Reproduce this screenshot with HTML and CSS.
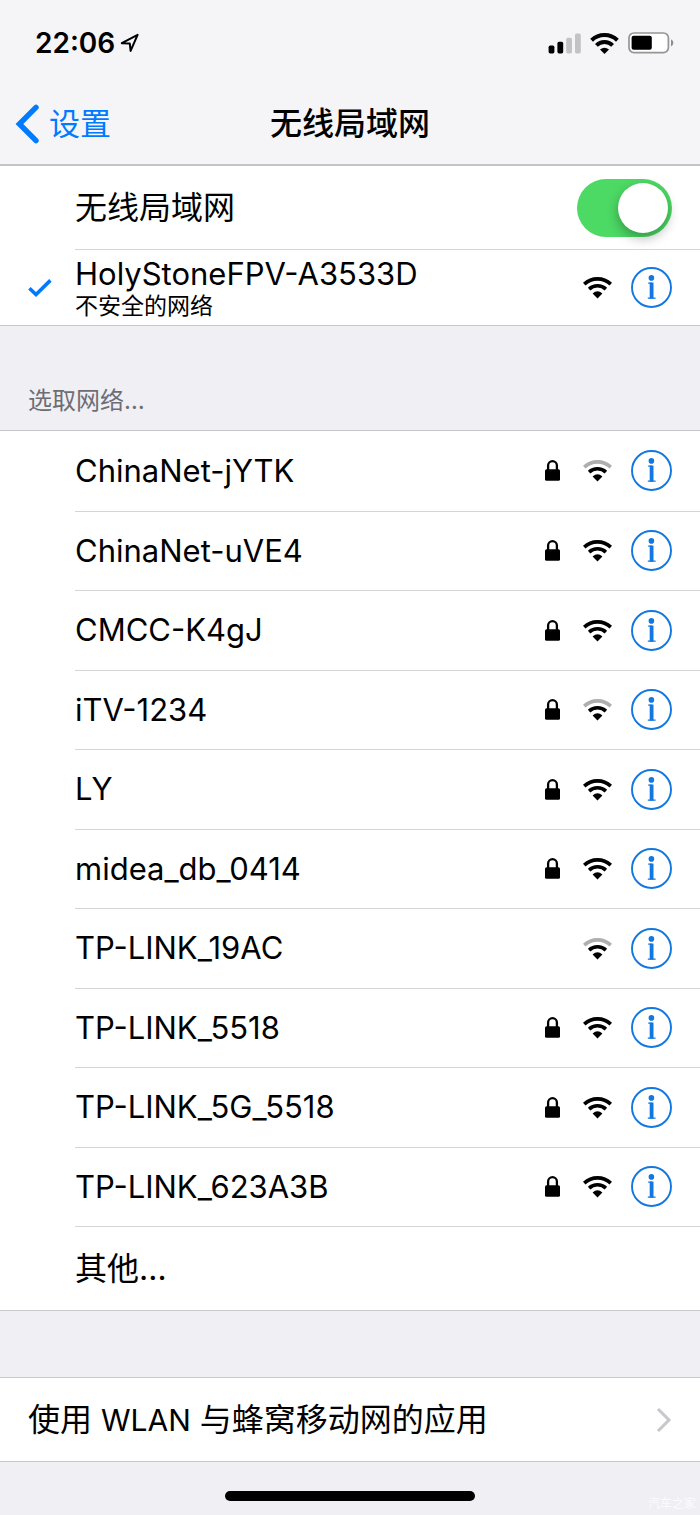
FILE: index.html
```html
<!DOCTYPE html>
<html lang="zh-CN">
<head>
    <meta charset="UTF-8">
    <meta name="viewport" content="width=device-width, initial-scale=1.0">
    <title>无线局域网</title>
    <link rel="stylesheet" href="styles.css">
</head>
<body>
    <!-- shared icons -->
    <svg class="sprite" aria-hidden="true">
        <symbol id="wifi" viewBox="0 0 29 23">
            <path class="arc" d="M1.2 8.1A19.5 19.5 0 0 1 27.8 8.1" fill="none" stroke-width="3.7"/>
            <path d="M6.1 13.1A12.4 12.4 0 0 1 22.9 13.1" fill="none" stroke="currentColor" stroke-width="3.6"/>
            <path d="M9.6 17.4Q14.5 13.2 19.4 17.4L14.5 22.6Z" fill="currentColor"/>
        </symbol>
        <symbol id="lock" viewBox="0 0 15 21">
            <rect x="0" y="9.2" width="15" height="11.6" rx="1.5" fill="currentColor"/>
            <path d="M3.1 10V5.6A4.4 4.4 0 0 1 11.9 5.6V10" fill="none" stroke="currentColor" stroke-width="2.3"/>
        </symbol>
        <symbol id="info" viewBox="0 0 41 41">
            <circle cx="20.5" cy="20.5" r="19.5" fill="none" stroke="currentColor" stroke-width="1.9"/>
            <circle cx="20.4" cy="10.9" r="2.8" fill="currentColor"/>
            <path d="M17.2 16.2H20.6V31M16.8 31.2H24.6" fill="none" stroke="currentColor" stroke-width="1.3"/>
            <rect x="18.7" y="15.6" width="3.8" height="16" fill="currentColor"/>
        </symbol>
    </svg>

    <header class="top">
        <div class="status-bar">
            <span class="time">22:06</span>
            <svg class="location" width="20" height="20" viewBox="0 0 20 20"><path d="M1.8 10.2L17.6 1.8L10.6 17.9L9.8 10.6Z" fill="none" stroke="currentColor" stroke-width="2" stroke-linejoin="round"/></svg>
            <div class="status-icons">
                <svg width="33" height="21" viewBox="0 0 33 21">
                    <rect x="0.6" y="12.6" width="5.8" height="7.8" rx="1.6"/>
                    <rect x="9.4" y="8.8" width="5.8" height="11.6" rx="1.6"/>
                    <rect x="18.2" y="4.8" width="5.8" height="15.6" rx="1.6" fill="#c3c3c5"/>
                    <rect x="27" y="0.4" width="5.8" height="20" rx="1.6" fill="#c3c3c5"/>
                </svg>
                <svg width="29" height="21" viewBox="0 0 29 21">
                    <path d="M1.6 7.3A18.6 18.6 0 0 1 27.4 7.3M6.4 12.4A11.6 11.6 0 0 1 22.6 12.4" fill="none" stroke="currentColor" stroke-width="4"/>
                    <path d="M10 16.6Q14.5 13 19 16.6L14.5 21Z"/>
                </svg>
                <svg width="46" height="22" viewBox="0 0 46 22">
                    <rect x="1" y="1" width="39.4" height="19.6" rx="5" fill="#fff" stroke="#959597" stroke-width="1.7"/>
                    <rect x="3.6" y="3.8" width="20.2" height="14" rx="2"/>
                    <path d="M43 7.2Q45.4 8.2 45.4 10.8Q45.4 13.4 43 14.4Z" fill="#8e8e90"/>
                </svg>
            </div>
        </div>
        <nav class="nav-bar">
            <a class="back" href="#">
                <svg width="24" height="40" viewBox="0 0 24 40"><path d="M21 3.4L4.4 20L21 36.6" fill="none" stroke="currentColor" stroke-width="5.4" stroke-linecap="round"/></svg>
                设置
            </a>
            <h1>无线局域网</h1>
        </nav>
    </header>

    <main>
        <section class="group">
            <div class="row tall">
                <label class="name" for="wlan">无线局域网</label>
                <input class="switch" type="checkbox" role="switch" id="wlan" checked>
            </div>
            <div class="row current">
                <svg class="check" width="24" height="20" viewBox="0 0 24 20"><path d="M1.4 10.2L8 16.6L22.4 2.4" fill="none" stroke="currentColor" stroke-width="3.6"/></svg>
                <div class="name">
                    <div>HolyStoneFPV-A3533D</div>
                    <div class="note">不安全的网络</div>
                </div>
                <svg class="wifi"><use href="#wifi"/></svg>
                <button class="info" aria-label="HolyStoneFPV-A3533D"><svg><use href="#info"/></svg></button>
            </div>
        </section>

        <h2>选取网络…</h2>
        <ul class="group networks">
            <li class="row">
                <span class="name">ChinaNet-jYTK</span>
                <svg class="lock"><use href="#lock"/></svg>
                <svg class="wifi weak"><use href="#wifi"/></svg>
                <button class="info" aria-label="ChinaNet-jYTK"><svg><use href="#info"/></svg></button>
            </li>
            <li class="row">
                <span class="name">ChinaNet-uVE4</span>
                <svg class="lock"><use href="#lock"/></svg>
                <svg class="wifi"><use href="#wifi"/></svg>
                <button class="info" aria-label="ChinaNet-uVE4"><svg><use href="#info"/></svg></button>
            </li>
            <li class="row">
                <span class="name">CMCC-K4gJ</span>
                <svg class="lock"><use href="#lock"/></svg>
                <svg class="wifi"><use href="#wifi"/></svg>
                <button class="info" aria-label="CMCC-K4gJ"><svg><use href="#info"/></svg></button>
            </li>
            <li class="row">
                <span class="name">iTV-1234</span>
                <svg class="lock"><use href="#lock"/></svg>
                <svg class="wifi weak"><use href="#wifi"/></svg>
                <button class="info" aria-label="iTV-1234"><svg><use href="#info"/></svg></button>
            </li>
            <li class="row">
                <span class="name">LY</span>
                <svg class="lock"><use href="#lock"/></svg>
                <svg class="wifi"><use href="#wifi"/></svg>
                <button class="info" aria-label="LY"><svg><use href="#info"/></svg></button>
            </li>
            <li class="row">
                <span class="name">midea_db_0414</span>
                <svg class="lock"><use href="#lock"/></svg>
                <svg class="wifi"><use href="#wifi"/></svg>
                <button class="info" aria-label="midea_db_0414"><svg><use href="#info"/></svg></button>
            </li>
            <li class="row">
                <span class="name">TP-LINK_19AC</span>
                <svg class="wifi weak"><use href="#wifi"/></svg>
                <button class="info" aria-label="TP-LINK_19AC"><svg><use href="#info"/></svg></button>
            </li>
            <li class="row">
                <span class="name">TP-LINK_5518</span>
                <svg class="lock"><use href="#lock"/></svg>
                <svg class="wifi"><use href="#wifi"/></svg>
                <button class="info" aria-label="TP-LINK_5518"><svg><use href="#info"/></svg></button>
            </li>
            <li class="row">
                <span class="name">TP-LINK_5G_5518</span>
                <svg class="lock"><use href="#lock"/></svg>
                <svg class="wifi"><use href="#wifi"/></svg>
                <button class="info" aria-label="TP-LINK_5G_5518"><svg><use href="#info"/></svg></button>
            </li>
            <li class="row">
                <span class="name">TP-LINK_623A3B</span>
                <svg class="lock"><use href="#lock"/></svg>
                <svg class="wifi"><use href="#wifi"/></svg>
                <button class="info" aria-label="TP-LINK_623A3B"><svg><use href="#info"/></svg></button>
            </li>
            <li class="row tall">
                <a class="name" href="#">其他…</a>
            </li>
        </ul>

        <section class="group apps">
            <a class="row tall link" href="#">
                <span class="name">使用 <span class="latin">WLAN</span> 与蜂窝移动网的应用</span>
                <svg width="16" height="26" viewBox="0 0 16 26"><path d="M2 2L13 13L2 24" fill="none" stroke="#c7c7cc" stroke-width="3"/></svg>
            </a>
        </section>
    </main>

    <footer class="home">
        <div class="home-bar"></div>
        <span class="watermark">汽车之家</span>
    </footer>
</body>
</html>
```
FILE: styles.css
```css
* {
    box-sizing: border-box;
}
body {
    margin: 0;
    min-height: 100vh;
    display: flex;
    flex-direction: column;
    background-color: #efeff4;
    color: #000;
    font-family: Inter, 'Noto Sans CJK SC', sans-serif;
    font-size: 32px;
    line-height: 40px;
}
a {
    color: inherit;
    text-decoration: none;
}
svg {
    display: block;
    flex-shrink: 0;
}
.sprite {
    position: absolute;
    width: 0;
    height: 0;
}
.top {
    background-color: #f5f5f7;
    border-bottom: 2px solid #c4c4c6;
}
.status-bar {
    display: flex;
    align-items: center;
    height: 84px;
    padding: 2px 26px 0 35px;
}
.time {
    font-size: 28px;
    font-weight: 600;
}
.location {
    margin-left: 5px;
}
.status-icons {
    display: flex;
    align-items: center;
    gap: 9px;
    margin-left: auto;
}
.nav-bar {
    display: grid;
    grid-template-columns: 1fr auto 1fr;
    align-items: center;
    height: 80px;
    padding: 0 15px;
}
.back {
    display: flex;
    align-items: center;
    gap: 10px;
    color: #007aff;
    font-size: 31px;
}
h1 {
    margin: 0;
    font-size: 32px;
    font-weight: 500;
}
main {
    flex: 1;
    display: flex;
    flex-direction: column;
}
.group {
    margin: 0;
    padding: 0;
    list-style: none;
    background-color: #fff;
    border-bottom: 1px solid #c8c7cc;
}
.row {
    display: flex;
    align-items: center;
    margin-left: 75px;
    padding-right: 28px;
}
.row + .row {
    border-top: 1px solid #d5d5d8;
}
.tall {
    height: 83px;
}
.name {
    flex: 1;
}
.current {
    height: 76px;
}
.current,
.networks {
    font-size: 31px;
}
.current .name {
    line-height: 36px;
}
.current .note {
    font-size: 23px;
    line-height: 28px;
}
.check {
    margin-left: -47px;
    margin-right: 23px;
    color: #007aff;
}
.lock {
    width: 15px;
    height: 21px;
    margin-right: 23px;
}
.wifi {
    width: 29px;
    height: 23px;
    margin-right: 19px;
}
.arc {
    stroke: var(--arc, #000);
}
.weak {
    --arc: #aeaeae;
}
.info {
    padding: 0;
    border: none;
    background: none;
    color: #1277e0;
    cursor: pointer;
}
.info svg {
    width: 41px;
    height: 41px;
}
.switch {
    appearance: none;
    display: flex;
    justify-content: flex-start;
    width: 95px;
    height: 58px;
    margin: 0;
    padding: 4px;
    border-radius: 29px;
    background-color: #e5e5ea;
    cursor: pointer;
}
.switch::before {
    content: "";
    width: 50px;
    height: 50px;
    border-radius: 50%;
    background-color: #fff;
    box-shadow: 0 5px 12px rgba(0, 0, 0, 0.3);
}
.switch:checked {
    justify-content: flex-end;
    background-color: #4cd964;
}
h2 {
    margin: 0;
    padding: 55px 28px 9px;
    color: #6d6d72;
    font-size: 24px;
    font-weight: 400;
}
.networks {
    flex: 1;
    display: flex;
    flex-direction: column;
    border-top: 1px solid #c8c7cc;
}
/* networks share the remaining height equally */
.networks .row {
    flex: 1 0 64px;
}
.networks .tall {
    flex: 0 0 84px;
    font-size: 32px;
}
.apps {
    margin-top: 66px;
    border-top: 1px solid #c8c7cc;
}
.link {
    margin-left: 0;
    padding-left: 28px;
}
.latin {
    font-size: 30px;
}
.home {
    position: relative;
    height: 53px;
    padding-top: 29px;
}
.home-bar {
    width: 250px;
    height: 10px;
    margin: 0 auto;
    border-radius: 5px;
    background-color: #000;
}
.watermark {
    position: absolute;
    right: 4px;
    bottom: 2px;
    color: rgba(255, 255, 255, 0.8);
    font-size: 12px;
    line-height: 18px;
}
```
